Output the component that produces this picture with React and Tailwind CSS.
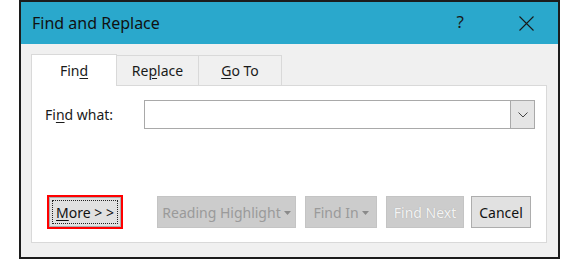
import React from 'react'

const Caret = ({ color = '#8a8a8a' }) => (
  <svg width="7" height="4" viewBox="0 0 7 4" className="ml-[3px] mt-[1px]">
    <path d="M0 0 H7 L3.5 4 Z" fill={color} />
  </svg>
)

const Tab = ({ active, children, w }) => (
  <div
    className={
      active
        ? `${w} h-[32px] -mb-px bg-white border border-b-0 border-[#d9d9d9] flex items-center justify-center relative z-10`
        : `${w} h-[30px] bg-[#f0f0f0] border border-b-0 border-l-0 border-[#d9d9d9] flex items-center justify-center`
    }
  >
    <span className="text-[14px] text-[#1a1a1a]">{children}</span>
  </div>
)

const App = () => {
  return (
    <div className="w-[580px] h-[264px] bg-white" style={{ fontFamily: '"Noto Sans", "Open Sans", sans-serif' }}>
      <div className="ml-[19px] w-[541px] h-[259px] border-2 border-[#1c1c1c] flex flex-col">
        {/* title bar */}
        <div className="h-[42px] bg-[#2aa8cc] flex items-center pl-[11px] pr-[24px]">
          <span className="text-[16px] text-[#111] flex-1">Find and Replace</span>
          <span className="text-[17px] text-[#1a1a1a] mr-[55px] mt-[-2px]">?</span>
          <svg width="15" height="15" viewBox="0 0 15 15">
            <path d="M0.5 0.5 L14.5 14.5 M14.5 0.5 L0.5 14.5" stroke="#1a1a1a" strokeWidth="1.1" />
          </svg>
        </div>

        {/* body */}
        <div className="flex-1 bg-[#f0f0f0] pt-[10px] pl-[10px] pr-[11px] pb-[14px] flex flex-col">
          <div className="flex items-end">
            <Tab active w="w-[86px]">
              Fin<span className="underline underline-offset-2">d</span>
            </Tab>
            <Tab w="w-[82px]">
              Re<span className="underline underline-offset-2">p</span>lace
            </Tab>
            <Tab w="w-[83px]">
              <span className="underline underline-offset-2">G</span>o To
            </Tab>
          </div>

          <div className="flex-1 bg-white border border-[#d9d9d9] flex flex-col pt-[14px] pl-[13px] pr-[11px] pb-[13px]">
            <div className="flex items-center">
              <span className="w-[99px] text-[14px] text-[#1a1a1a]">
                Fi<span className="underline underline-offset-2">n</span>d what:
              </span>
              <div className="flex-1 h-[29px] border border-[#a9a9a9] flex justify-end">
                <div className="w-[24px] h-full bg-[#e5e5e5] border-l border-[#a9a9a9] flex items-center justify-center">
                  <svg width="10" height="6" viewBox="0 0 10 6">
                    <path d="M0.5 0.5 L5 5 L9.5 0.5" stroke="#444" strokeWidth="1" fill="none" />
                  </svg>
                </div>
              </div>
            </div>

            <div className="flex-1" />

            <div className="flex items-center pl-[2px] pr-[3px]">
              <div className="w-[76px] h-[34px] border-2 border-[#ff0000] flex">
                <div className="flex-1 bg-[#e1e1e1] border border-[#adadad] p-[2px] flex">
                  <div className="flex-1 border border-dotted border-[#222] flex items-center justify-center text-[14px] text-[#111]">
                    <span className="underline underline-offset-2">M</span>ore &gt; &gt;
                  </div>
                </div>
              </div>

              <div className="ml-[34px] w-[139px] h-[32px] bg-[#cccccc] border border-[#c4c4c4] flex items-center justify-center text-[14px] text-[#9a9a9a]">
                Reading Highlight
                <Caret />
              </div>
              <div className="ml-[9px] w-[72px] h-[32px] bg-[#cccccc] border border-[#c4c4c4] flex items-center justify-center text-[14px] text-[#9a9a9a]">
                Find In
                <Caret />
              </div>
              <div
                className="ml-[9px] w-[78px] h-[32px] bg-[#cccccc] border border-[#c4c4c4] flex items-center justify-center text-[14px] text-[#f4f4f4]"
                style={{ textShadow: '0 0 1px #a0a0a0' }}
              >
                Find Next
              </div>
              <div className="ml-[7px] w-[60px] h-[32px] bg-[#e1e1e1] border border-[#adadad] flex items-center justify-center text-[14px] text-[#111]">
                Cancel
              </div>
            </div>
          </div>
        </div>
      </div>
    </div>
  )
}

export default App
